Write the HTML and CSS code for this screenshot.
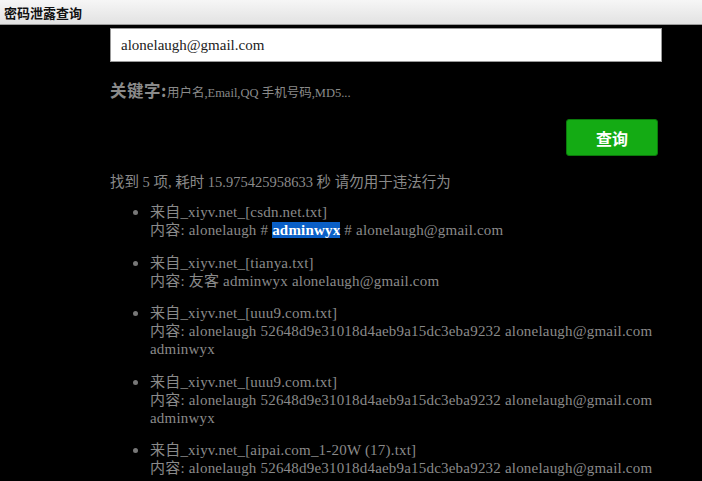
FILE: index.html
```html
<!DOCTYPE html>
<html>
<head>
<meta charset="utf-8">
<link rel="stylesheet" href="styles.css">
</head>
<body>
<div class="titlebar">密码泄露查询</div>
<div class="main">
  <div class="search">alonelaugh@gmail.com</div>
  <div class="hint"><b>关键字:</b><span>用户名,Email,QQ 手机号码,MD5...</span></div>
  <div class="actions"><button class="btn">查询</button></div>
  <div class="summary">找到 5 项, 耗时 15.975425958633 秒 请勿用于违法行为</div>
  <ul class="results">
    <li>来自_xiyv.net_[csdn.net.txt]<br>内容: alonelaugh # <span class="sel">adminwyx</span> # alonelaugh@gmail.com</li>
    <li>来自_xiyv.net_[tianya.txt]<br>内容: 友客 adminwyx alonelaugh@gmail.com</li>
    <li>来自_xiyv.net_[uuu9.com.txt]<br>内容: alonelaugh 52648d9e31018d4aeb9a15dc3eba9232 alonelaugh@gmail.com adminwyx</li>
    <li>来自_xiyv.net_[uuu9.com.txt]<br>内容: alonelaugh 52648d9e31018d4aeb9a15dc3eba9232 alonelaugh@gmail.com adminwyx</li>
    <li>来自_xiyv.net_[aipai.com_1-20W (17).txt]<br>内容: alonelaugh 52648d9e31018d4aeb9a15dc3eba9232 alonelaugh@gmail.com</li>
  </ul>
</div>
</body>
</html>
```
FILE: styles.css
```css
html, body {
  margin: 0;
  padding: 0;
  background: #000;
  height: 100%;
  overflow: hidden;
}
body {
  font-family: "Liberation Serif", "Noto Sans CJK SC", serif;
  color: #8a8a8a;
}
.titlebar {
  height: 24px;
  line-height: 26px;
  padding-left: 4px;
  background: linear-gradient(#f6f6f6, #e2e2e2);
  border-bottom: 1px solid #9a9a9a;
  font-family: "Noto Sans CJK SC", sans-serif;
  font-weight: bold;
  font-size: 13px;
  color: #111;
}
.main {
  padding: 3px 40px 0 110px;
}
.search {
  height: 32px;
  border: 1px solid #999;
  background: #fff;
  box-sizing: content-box;
  padding-left: 10px;
  line-height: 33px;
  font-size: 15px;
  color: #222;
}
.hint {
  margin-top: 19px;
  height: 18px;
  line-height: 18px;
  font-size: 14px;
  color: #8a8a8a;
}
.hint b {
  font-family: "Noto Sans CJK SC", sans-serif;
  font-size: 16.5px;
  letter-spacing: 0.5px;
}
.hint span {
  font-size: 12.5px;
}
.actions {
  display: flex;
  justify-content: flex-end;
  margin-top: 20px;
  padding-right: 4px;
}
.btn {
  width: 92px;
  height: 37px;
  border: 1px solid #0b7a0b;
  border-radius: 3px;
  background: #14ab14;
  color: #fff;
  font-family: "Noto Sans CJK SC", sans-serif;
  font-weight: bold;
  font-size: 16px;
  padding: 0;
}
.summary {
  margin-top: 17px;
  font-size: 14.5px;
  line-height: 18px;
  color: #8a8a8a;
}
.results {
  margin: 12px 0 0 0;
  padding-left: 40px;
  list-style: none;
  font-size: 15px;
  letter-spacing: 0.2px;
  line-height: 18px;
}
.results li {
  position: relative;
  margin-bottom: 14.5px;
}
.results li::before {
  content: "";
  position: absolute;
  left: -17px;
  top: 7px;
  width: 5px;
  height: 5px;
  border-radius: 50%;
  background: #777;
}
.sel {
  background: #0a5fc6;
  color: #fff;
  font-weight: bold;
}
```
